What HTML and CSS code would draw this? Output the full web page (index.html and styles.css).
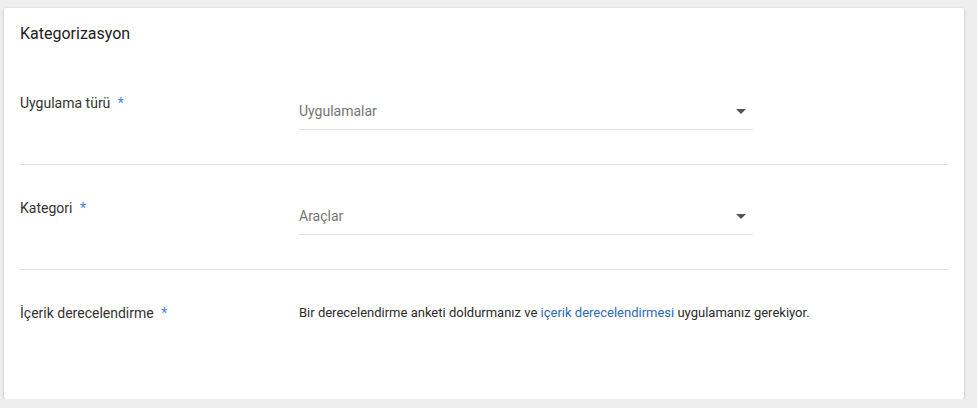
FILE: index.html
```html
<!DOCTYPE html>
<html lang="tr">
<head>
  <meta charset="UTF-8">
  <title>Kategorizasyon</title>
  <link rel="stylesheet" href="styles.css">
</head>
<body>
  <div class="card">
    <h3 class="card-title">Kategorizasyon</h3>

    <!-- Uygulama türü -->
    <div class="row">
      <div class="label">Uygulama türü <span class="req">*</span></div>
      <div class="field">
        <div class="select">
          <span class="select-value">Uygulamalar</span>
          <span class="arrow"></span>
        </div>
      </div>
    </div>

    <!-- Kategori -->
    <div class="row">
      <div class="label">Kategori <span class="req">*</span></div>
      <div class="field">
        <div class="select">
          <span class="select-value">Araçlar</span>
          <span class="arrow"></span>
        </div>
      </div>
    </div>

    <!-- İçerik derecelendirme -->
    <div class="row last">
      <div class="label">İçerik derecelendirme <span class="req">*</span></div>
      <div class="field">
        <p class="note">Bir derecelendirme anketi doldurmanız ve <a href="#">içerik derecelendirmesi</a> uygulamanız gerekiyor.</p>
      </div>
    </div>
  </div>
</body>
</html>
```

FILE: styles.css
```css
body {
  font-family: Roboto, "Liberation Sans", Arial, sans-serif;
  background: #eeeeee;
  margin: 0;
  padding: 8px 13px 0 4px;
  color: #212121;
}

.card {
  background: #fff;
  padding: 16px;
  box-shadow: 0 1px 3px rgba(0,0,0,0.25);
  border-radius: 2px;
  height: 359px;
}

.card-title {
  margin: 0 0 16px;
  font-size: 16px;
  font-weight: 400;
  line-height: 20px;
}

.row {
  display: flex;
  padding: 33px 0 34px;
  border-bottom: 1px solid #e0e0e0;
}

.row.last {
  border-bottom: none;
}

.label {
  width: 279px;
  flex-shrink: 0;
  font-size: 14px;
  line-height: 20px;
  color: #333;
}

.req {
  color: #4285f4;
  margin-left: 4px;
}

.field {
  flex: 1;
}

.select {
  width: 454px;
  display: flex;
  align-items: center;
  justify-content: space-between;
  padding: 8px 0;
  border-bottom: 1px solid #e0e0e0;
}

.select-value {
  font-size: 14px;
  line-height: 20px;
  color: #757575;
}

.arrow {
  width: 0;
  height: 0;
  border-left: 5px solid transparent;
  border-right: 5px solid transparent;
  border-top: 5px solid #555;
  margin-right: 7px;
}

.note {
  margin: 0;
  font-size: 13px;
  line-height: 20px;
  color: #2b2b2b;
}

.note a {
  color: #2a6ab5;
  text-decoration: none;
}
```
